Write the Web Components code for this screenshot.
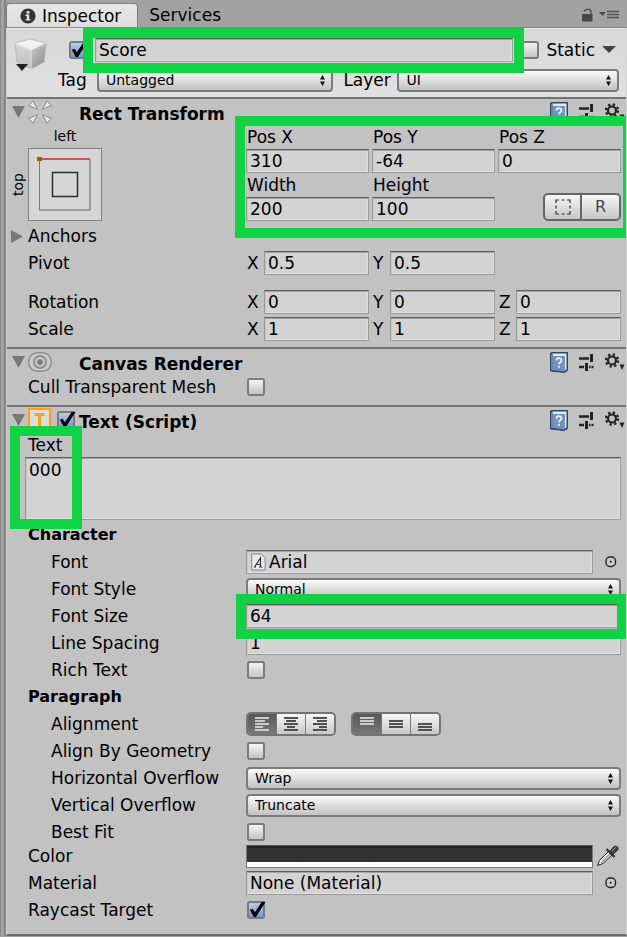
<!DOCTYPE html>
<html lang="en">
<head>
<meta charset="utf-8">
<meta name="viewport" content="width=device-width, initial-scale=1">
<title>Inspector</title>
<style>
  body {
    margin: 0;
    background-color: #a2a2a2;
    color: #000;
    font: 17px/24px "DejaVu Sans", Verdana, sans-serif;
  }
</style>
</head>
<body>

<inspector-window>
  <object-header slot="header"></object-header>

  <inspector-component name="Rect Transform" icon="rect">
    <rect-layout></rect-layout>
    <property-group>
      <vector-property label="Pivot" values="0.5,0.5"></vector-property>
    </property-group>
    <property-group spaced>
      <vector-property label="Rotation" values="0,0,0"></vector-property>
      <vector-property label="Scale" values="1,1,1"></vector-property>
    </property-group>
  </inspector-component>

  <inspector-component name="Canvas Renderer" icon="canvas">
    <toggle-property label="Cull Transparent Mesh"></toggle-property>
  </inspector-component>

  <inspector-component name="Text (Script)" icon="text" toggle>
    <area-property label="Text" value="000"></area-property>
    <property-group name="Character">
      <object-property label="Font" value="Arial" asset></object-property>
      <enum-property label="Font Style" value="Normal"></enum-property>
      <text-property label="Font Size" value="64" marked></text-property>
      <text-property label="Line Spacing" value="1"></text-property>
      <toggle-property label="Rich Text"></toggle-property>
    </property-group>
    <property-group name="Paragraph">
      <align-property label="Alignment"></align-property>
      <toggle-property label="Align By Geometry"></toggle-property>
      <enum-property label="Horizontal Overflow" value="Wrap"></enum-property>
      <enum-property label="Vertical Overflow" value="Truncate"></enum-property>
      <toggle-property label="Best Fit"></toggle-property>
    </property-group>
    <property-group>
      <color-property label="Color" value="#323232"></color-property>
      <object-property label="Material" value="None (Material)"></object-property>
      <toggle-property label="Raycast Target" checked></toggle-property>
    </property-group>
  </inspector-component>
</inspector-window>

<script>
const controls = /* css */`
  * {
    box-sizing: border-box;
  }

  :host {
    box-sizing: border-box;
    display: block;
  }

  input, textarea, select, button {
    color: inherit;
    font: inherit;
    margin: 0;
    min-width: 0;
  }

  input:focus, textarea:focus, select:focus {
    outline: none;
  }

  svg {
    display: block;
    flex: none;
  }

  .field {
    background-color: #d3d3d3;
    border: 1px solid #999;
    border-top-color: #5e5e5e;
    border-radius: 0;
    box-shadow: inset 0 1px #a4a4a4, inset -1px -1px #e0e0e0, inset 1px 0 #c6c6c6;
    height: 24px;
    padding: 0 3px;
    width: 100%;
  }

  .check {
    appearance: none;
    background: linear-gradient(#f4f4f4, #c4c4c4);
    border: 2px solid #7b7b7b;
    border-radius: 3px;
    flex: none;
    height: 18px;
    position: relative;
    width: 18px;
  }

  .check:checked {
    background: linear-gradient(#b4cbea, #7799d0);
  }

  .check:checked::after {
    background-color: #000;
    clip-path: polygon(10% 52%, 26% 46%, 38% 66%, 76% 6%, 98% 4%, 44% 94%, 32% 94%);
    content: "";
    inset: -2px -3px -1px -1px;
    position: absolute;
  }

  .popup {
    display: block;
    position: relative;
    width: 100%;
  }

  .popup select {
    appearance: none;
    background: linear-gradient(#fafafa, #dedede 50%, #c2c2c2);
    border: 2px solid #7b7b7b;
    border-radius: 4px;
    display: block;
    font-size: 14px;
    height: 23px;
    line-height: 18px;
    padding: 0 20px 0 7px;
    width: 100%;
  }

  .popup svg {
    pointer-events: none;
    position: absolute;
    right: 8px;
    top: 6px;
  }

  /* green callout drawn around whatever it wraps */
  .mark {
    position: relative;
  }

  .mark::after {
    border: 10px solid #11d245;
    box-sizing: border-box;
    content: "";
    inset: var(--mark-inset, -10px);
    pointer-events: none;
    position: absolute;
    z-index: 2;
  }
`

const icons = {
  info: '<svg width="16" height="16" viewBox="0 0 16 16"><circle cx="8" cy="8" r="7.6" fill="#333"/><circle cx="8" cy="4.2" r="1.5" fill="#e4e4e4"/><path d="M5.5 6.6h3.7v4.6h1.3v1.4H5.5v-1.4h1.3V8H5.5z" fill="#e4e4e4"/></svg>',
  lock: '<svg width="11" height="14" viewBox="0 0 11 14"><path d="M2 3.500C3.500.5 8.800.5 9 4v3" fill="none" stroke="#555" stroke-width="1.600"/><rect y="6" width="10.500" height="7.500" fill="#484848"/></svg>',
  menu: '<svg width="21" height="12" viewBox="0 0 21 12"><path d="M0 3h7L3.500 7z" fill="#505050"/><path d="M8 2.500h12M8 5.500h12M8 8.500h12" stroke="#555" stroke-width="1.600"/></svg>',
  cube: '<svg width="34" height="34" viewBox="0 0 34 34"><defs><linearGradient id="l" x2="0" y2="1"><stop stop-color="#d9d9d9"/><stop offset="1" stop-color="#bdbdbd"/></linearGradient><linearGradient id="r" x2=".6" y2="1"><stop stop-color="#d2d2d2"/><stop offset="1" stop-color="#909090"/></linearGradient></defs><path d="M16 1 32 5 17 12 1 5z" fill="#f0f0f0"/><path d="M1 5 17 12v19L3 24z" fill="url(#l)"/><path d="M32 5 17 12v19l13-7z" fill="url(#r)"/><path d="M1 5 16 1l16 4-2 19-13 7L3 24z" fill="none" stroke="#a4a4a4" stroke-width=".6"/><path d="m1 5 16 7 15-7M17 12v19" fill="none" stroke="#f0f0f0" stroke-width=".8"/><path d="M2 26h12l-6 7z" fill="#222"/></svg>',
  down: '<svg width="14" height="8" viewBox="0 0 14 8"><path d="M0 0h14L7 7z" fill="#444"/></svg>',
  updown: '<svg width="5" height="11" viewBox="0 0 5 11"><path d="M0 4.500 2.500 0 5 4.500zM0 6.500h5L2.500 11z" fill="#111"/></svg>',
  open: '<svg width="13" height="12" viewBox="0 0 13 12"><path d="M0 0h13L6.500 12z" fill="#777"/></svg>',
  closed: '<svg width="12" height="13" viewBox="0 0 12 13"><path d="M0 0v13l12-6.500z" fill="#777"/></svg>',
  rect: '<svg width="24" height="24" viewBox="0 0 24 24" fill="#e8e8e8" stroke="#888" stroke-linejoin="round"><path d="M.8 5.500 5 .8l4.400 8.400zM23.200 5.500 19 .8l-4.400 8.400zM.8 18.500 5 23.200l4.400-8.400zM23.200 18.500 19 23.200l-4.400-8.400z"/></svg>',
  canvas: '<svg width="24" height="20" viewBox="0 0 24 20" fill="none" stroke="#8b8b8b"><rect x=".7" y=".7" width="22.600" height="18.600" rx="9" fill="#cdcdcd" stroke-width="1.400"/><circle cx="12" cy="10" r="6" stroke-width="2"/><circle cx="12" cy="10" r="2.600" fill="#777"/></svg>',
  text: '<svg width="23" height="24" viewBox="0 0 23 24"><rect x="1" y="1" width="21" height="22" fill="#dcdcdc" stroke="#fda114" stroke-width="2"/><path d="M6.500 5h10v3H13v12h-3V8H6.500z" fill="#fda114"/></svg>',
  book: '<svg width="18" height="21" viewBox="0 0 18 21"><path d="M.5 1 2.500.5h15v18l-3 2-14-1.500z" fill="#35547f" stroke="#30435f"/><path d="M2.500 1.500h14v16l-2 1V4H3z" fill="#e2e8ef"/><path d="M3 4h11.500v15.500L3 18z" fill="#6f93bf"/><path d="M2 2.500v15.500" stroke="#9fb8d6"/><path d="M6.500 8.500c0-3 5-3 5-.2 0 2-2.500 1.800-2.500 4" fill="none" stroke="#eef4fb" stroke-width="1.800"/><circle cx="9" cy="14.800" r="1.100" fill="#eef4fb"/></svg>',
  sliders: '<svg width="15" height="18" viewBox="0 0 15 18" stroke="#222" fill="none"><path d="M0 5.500h10M0 14h5M10 14h1.500" stroke-width="2.400"/><path d="M12.500 1v8M7.500 10v8" stroke-width="3"/><path d="M12.500 14h2" stroke-width="2.400"/></svg>',
  gear: '<svg width="20" height="18" viewBox="0 0 20 18"><circle cx="7" cy="7.500" r="4" fill="none" stroke="#222" stroke-width="2.200"/><circle cx="7" cy="7.500" r="6" fill="none" stroke="#222" stroke-width="2.400" stroke-dasharray="2.300 2.410"/><path d="M14.500 11.500h5L17 17z" fill="#222"/></svg>',
  anchors: '<svg width="74" height="73" viewBox="0 0 74 73"><rect x=".5" y=".5" width="73" height="72" fill="#d6d6d6" stroke="#818181"/><path d="M62 11v51H11" fill="none" stroke="#888" stroke-width="1.500"/><path d="M11.500 62V11" stroke="#d34e4e"/><path d="M11 11h51" stroke="#d34e4e" stroke-width="2"/><rect x="24.500" y="24.500" width="25" height="24" fill="none" stroke="#2e2e2e" stroke-width="1.500"/><path d="M9 9h5v4H9z" fill="#996300"/></svg>',
  blueprint: '<svg width="16" height="16" viewBox="0 0 16 16"><path d="M1 4V1h3M6.500 1h3M12 1h3v3M15 6.500v3M15 12v3h-3M9.500 15h-3M4 15H1v-3M1 9.500v-3" fill="none" stroke="#333" stroke-width="1.200"/></svg>',
  asset: '<svg width="15" height="18" viewBox="0 0 15 18"><path d="M.7 1h9.500l4 4v12H.7z" fill="#e6ebef" stroke="#7b858d"/><path d="m3.500 14 6-9v9M5.500 11.500h4M3 14h2M8 14h3.500" fill="none" stroke="#333" stroke-width="1.200"/></svg>',
  picker: '<svg width="12" height="12" viewBox="0 0 12 12"><rect x="1" y="1" width="9.500" height="9.500" rx="4" fill="#ccc" stroke="#222" stroke-width="1.400"/><circle cx="5.700" cy="5.700" r="1" fill="#111"/></svg>',
  dropper: '<svg width="23" height="22" viewBox="0 0 23 22"><path d="m1.500 20.500 2-5 9-9 3.500 3.500-9 8.500z" fill="#eee" stroke="#222"/><path d="m5 18 9-9" stroke="#999" stroke-width="1.500"/><path d="m10.500 4 8 8" stroke="#333" stroke-width="2.400"/><path d="m13.500 7 4-5c2-2 6 0 4 3l-5 5z" fill="#444" stroke="#222"/><path d="m16 6 3.500-3.500" stroke="#aaa"/></svg>'
}

class BaseElement extends HTMLElement {
  constructor () {
    super()
    this.shadow = this.attachShadow({ mode: 'open' })
  }

  connectedCallback () {
    this.render()
  }
}

class InspectorWindow extends BaseElement {
  render () {
    this.shadow.innerHTML =
      /* html */`
      <style>
        ${controls}

        :host {
          padding-left: 6px;
          background: linear-gradient(to right, #8a8a8a 1px, #a2a2a2 1px, #a2a2a2 4px, #858585 4px, #858585 6px, #a2a2a2 6px);
        }

        .tabs {
          align-items: end;
          background-color: #a2a2a2;
          border-bottom: 1px solid #868686;
          display: flex;
          height: 28px;
        }

        .tabs button {
          align-items: center;
          background: none;
          border: none;
          display: flex;
          gap: 6px;
          height: 24px;
          padding: 0 11px;
        }

        .tabs button[aria-selected="true"] {
          background: linear-gradient(#e6e6e6, #dedede);
          border: 1px solid #7c7c7c;
          border-bottom: none;
          border-radius: 4px 4px 0 0;
          padding: 0 16px 0 13px;
        }

        .tools {
          align-items: center;
          display: flex;
          gap: 6px;
          height: 24px;
          margin-left: auto;
          padding-right: 7px;
        }

        main {
          background-color: #c2c2c2;
          border-bottom: 2px solid #6d6d6d;
          border-left: 1px solid #d0d0d0;
          border-right: 1px solid #d4d4d4;
          overflow-x: clip;
          overflow-clip-margin: 1px;
        }
      </style>

      <nav class="tabs" role="tablist">
        <button role="tab" aria-selected="true">${icons.info}Inspector</button>
        <button role="tab" aria-selected="false">Services</button>
        <div class="tools">${icons.lock}${icons.menu}</div>
      </nav>
      <main>
        <slot name="header"></slot>
        <slot></slot>
      </main>
      `
  }
}

class ObjectHeader extends BaseElement {
  render () {
    this.shadow.innerHTML =
      /* html */`
      <style>
        ${controls}

        :host {
          background: linear-gradient(#d8d8d8, #e0e0e0);
          border-top: 1px solid #ececec;
          display: flex;
          gap: 10px;
          height: 69px;
          padding: 9px 7px 0 7px;
        }

        .rows {
          display: flex;
          flex: 1;
          flex-direction: column;
          gap: 6px;
          min-width: 0;
        }

        .row {
          align-items: center;
          display: flex;
          height: 24px;
        }

        .name {
          --mark-inset: -10px -11px -11px -12px;
          flex: 1;
          margin: 0 8px;
        }

        .name input {
          display: block;
        }

        .active {
          margin-left: 11px;
        }

        .static {
          align-items: center;
          display: flex;
          gap: 7px;
          padding-right: 3px;
        }

        .tag, .layer {
          flex: none;
          width: 39px;
        }

        .layer {
          padding-left: 10px;
          width: 64px;
        }

        .popup {
          flex: 15 1 0;
        }

        .tag + .popup {
          flex: 16 1 0;
        }
      </style>

      ${icons.cube}
      <div class="rows">
        <div class="row">
          <input class="check active" type="checkbox" aria-label="Active" checked>
          <div class="name mark"><input class="field" type="text" aria-label="Name" value="Score"></div>
          <label class="static"><input class="check" type="checkbox">Static ${icons.down}</label>
        </div>
        <div class="row">
          <label class="tag" for="tag">Tag</label>
          <span class="popup"><select id="tag"><option>Untagged</option></select>${icons.updown}</span>
          <label class="layer" for="layer">Layer</label>
          <span class="popup"><select id="layer"><option>UI</option></select>${icons.updown}</span>
        </div>
      </div>
      `
  }
}

class InspectorComponent extends BaseElement {
  render () {
    const name = this.getAttribute('name')

    this.shadow.innerHTML =
      /* html */`
      <style>
        ${controls}

        :host {
          border-top: 2px solid #737373;
          padding-bottom: 6px;
        }

        :host([toggle]) {
          padding-bottom: 12px;
        }

        header {
          align-items: center;
          display: flex;
          height: 26px;
          padding: 0 1px 0 5px;
        }

        .icon {
          margin-left: 3px;
          width: 29px;
        }

        h2 {
          flex: 1;
          font-size: 17px;
          font-weight: 700;
          margin: 0;
          padding: 3px 0 0 22px;
        }

        .check + h2 {
          padding-left: 4px;
        }

        .tools {
          align-items: center;
          display: flex;
          gap: 11px;
        }

        .body {
          padding: 0 5px 0 21px;
        }
      </style>

      <header>
        ${icons.open}
        <div class="icon">${icons[this.getAttribute('icon')]}</div>
        ${this.hasAttribute('toggle') ? `<input class="check" type="checkbox" aria-label="${name}" checked>` : ''}
        <h2>${name}</h2>
        <div class="tools">${icons.book}${icons.sliders}${icons.gear}</div>
      </header>
      <div class="body"><slot></slot></div>
      `
  }
}

class PropertyGroup extends BaseElement {
  render () {
    const name = this.getAttribute('name')

    this.shadow.innerHTML =
      /* html */`
      <style>
        ${controls}

        :host {
          display: flex;
          flex-direction: column;
          gap: 3px;
        }

        :host([name]) {
          --indent: 23px;
          padding-top: 3px;
        }

        :host([spaced]) {
          padding-top: 15px;
        }

        h3 {
          font-size: 16px;
          font-weight: 700;
          margin: 0;
        }
      </style>

      ${name ? `<h3>${name}</h3>` : ''}
      <slot></slot>
      `
  }
}

class RectLayout extends BaseElement {
  cell (id, label, value) {
    return /* html */`
      <div class="cell">
        <label for="${id}">${label}</label>
        <input class="field" id="${id}" type="text" value="${value}">
      </div>`
  }

  render () {
    this.shadow.innerHTML =
      /* html */`
      <style>
        ${controls}

        .top {
          display: grid;
          grid-template-columns: 218px 1fr;
        }

        .preset {
          align-content: start;
          display: grid;
          font-size: 14px;
          grid-template-columns: 20px 74px;
          line-height: 23px;
          margin-left: -20px;
        }

        .preset .x {
          grid-column: 2;
          text-align: center;
        }

        .preset .y {
          line-height: 20px;
          text-align: center;
          transform: rotate(180deg);
          writing-mode: vertical-rl;
        }

        .cells {
          --mark-inset: -9px -12px -17px -11px;
          display: grid;
          gap: 0 3px;
          grid-template-columns: repeat(3, 1fr);
        }

        .cell {
          display: flex;
          flex-direction: column;
        }

        .cell label {
          padding-left: 1px;
        }

        .modes {
          align-self: end;
          display: flex;
          justify-self: end;
        }

        .modes button {
          align-items: center;
          background: linear-gradient(#f6f6f6, #c6c6c6);
          border: 2px solid #666;
          border-radius: 5px 0 0 5px;
          color: #444;
          display: flex;
          font-size: 16px;
          height: 28px;
          justify-content: center;
          padding: 0;
          width: 39px;
        }

        .modes button + button {
          border-left: none;
          border-radius: 0 5px 5px 0;
        }

        .anchors {
          align-items: center;
          background: none;
          border: none;
          display: flex;
          gap: 5px;
          margin: 3px 0 3px -17px;
          padding: 0;
        }
      </style>

      <div class="top">
        <div class="preset">
          <div class="x">left</div>
          <div class="y">top</div>
          ${icons.anchors}
        </div>
        <div class="cells mark">
          ${this.cell('x', 'Pos X', '310')}
          ${this.cell('y', 'Pos Y', '-64')}
          ${this.cell('z', 'Pos Z', '0')}
          ${this.cell('width', 'Width', '200')}
          ${this.cell('height', 'Height', '100')}
          <div class="modes">
            <button aria-label="Blueprint mode">${icons.blueprint}</button>
            <button>R</button>
          </div>
        </div>
      </div>
      <button class="anchors">${icons.closed}Anchors</button>
      `
  }
}

/* label on the left, control on the right */
class Property extends BaseElement {
  get value () {
    return this.getAttribute('value') || ''
  }

  styles () {
    return ''
  }

  render () {
    this.shadow.innerHTML =
      /* html */`
      <style>
        ${controls}

        :host {
          display: grid;
          grid-template-columns: 218px 1fr;
          min-height: 24px;
        }

        .label {
          padding-left: var(--indent, 0);
          white-space: nowrap;
        }

        .control {
          align-items: center;
          display: flex;
          min-width: 0;
        }

        .side {
          align-items: center;
          background: none;
          border: none;
          display: flex;
          flex: none;
          height: 24px;
          justify-content: center;
          padding: 0 0 0 7px;
          width: 28px;
        }

        ${this.styles()}
      </style>

      <label class="label" for="control">${this.getAttribute('label')}</label>
      <div class="control">${this.control()}</div>
      `
  }
}

class TextProperty extends Property {
  styles () {
    return /* css */`
      .mark {
        --mark-inset: -10px -6px -11px -10px;
        flex: 1;
      }
    `
  }

  control () {
    const field = `<input class="field" id="control" type="text" value="${this.value}">`
    return this.hasAttribute('marked') ? `<div class="control mark">${field}</div>` : field
  }
}

class ToggleProperty extends Property {
  styles () {
    return /* css */`
      .check {
        margin-left: 1px;
      }
    `
  }

  control () {
    return `<input class="check" id="control" type="checkbox" ${this.hasAttribute('checked') ? 'checked' : ''}>`
  }
}

class EnumProperty extends Property {
  control () {
    return `<span class="popup"><select id="control"><option>${this.value}</option></select>${icons.updown}</span>`
  }
}

class ObjectProperty extends Property {
  styles () {
    return /* css */`
      .object {
        flex: 1;
        position: relative;
      }

      .object .field {
        display: block;
      }

      :host([asset]) .field {
        padding-left: 22px;
      }

      .object svg {
        left: 5px;
        position: absolute;
        top: 3px;
      }
    `
  }

  control () {
    return /* html */`
      <div class="object">
        <input class="field" id="control" type="text" value="${this.value}">
        ${this.hasAttribute('asset') ? icons.asset : ''}
      </div>
      <button class="side" aria-label="Select">${icons.picker}</button>`
  }
}

class ColorProperty extends Property {
  styles () {
    return /* css */`
      .swatch {
        appearance: none;
        background-color: #fff;
        border: 1px solid #777;
        border-top-color: #555;
        flex: 1;
        height: 23px;
        padding: 0 0 5px;
      }

      .swatch::-webkit-color-swatch-wrapper {
        padding: 0;
      }

      .swatch::-webkit-color-swatch {
        border: none;
        border-radius: 0;
        box-shadow: inset 0 2px #222;
      }

      .side {
        padding-left: 0;
      }
    `
  }

  control () {
    return /* html */`
      <input class="swatch" id="control" type="color" value="${this.value}">
      <button class="side" aria-label="Pick color">${icons.dropper}</button>`
  }
}

class VectorProperty extends Property {
  styles () {
    return /* css */`
      .control {
        display: grid;
        gap: 3px;
        grid-template-columns: repeat(3, 1fr);
      }

      .axis {
        align-items: center;
        display: grid;
        grid-template-columns: 17px 1fr;
        padding-left: 1px;
      }
    `
  }

  control () {
    const values = this.getAttribute('values').split(',')
    return values.map((value, i) => /* html */`
      <label class="axis">${'XYZ'[i]}<input class="field" ${i ? '' : 'id="control"'} type="text" value="${value}"></label>`).join('')
  }
}

class AlignProperty extends Property {
  styles () {
    return /* css */`
      .control {
        gap: 15px;
      }

      .set {
        border: 2px solid #757575;
        border-radius: 5px;
        display: flex;
        height: 24px;
        overflow: hidden;
        width: 90px;
      }

      .set button {
        align-items: center;
        background: linear-gradient(#f6f6f6, #c8c8c8);
        border: none;
        border-left: 1px solid #757575;
        color: #505050;
        display: flex;
        flex: 1;
        justify-content: center;
        padding: 0;
      }

      .set button:first-child {
        border-left: none;
      }

      .set button[aria-pressed="true"] {
        background: linear-gradient(#585858, #787878);
        color: #ccc;
      }
    `
  }

  lines (widths, place, top) {
    const path = widths.map((w, i) => {
      const x = place === 'left' ? 0 : place === 'right' ? 14 - w : (14 - w) / 2
      return `M${x} ${top + i * 3}h${w}`
    }).join('')
    return `<svg width="14" height="16" viewBox="0 0 14 16"><path d="${path}" stroke="currentColor" stroke-width="2"/></svg>`
  }

  control () {
    const ragged = [14, 10, 14, 8, 14]
    const button = (name, svg, pressed) => `<button aria-label="${name}" aria-pressed="${pressed}">${svg}</button>`
    return /* html */`
      <div class="set">
        ${button('Left', this.lines(ragged, 'left', 2), true)}
        ${button('Center', this.lines(ragged, 'center', 2), false)}
        ${button('Right', this.lines(ragged, 'right', 2), false)}
      </div>
      <div class="set">
        ${button('Top', this.lines([14, 14, 14], 'left', 2), true)}
        ${button('Middle', this.lines([14, 14, 14], 'left', 5), false)}
        ${button('Bottom', this.lines([14, 14, 14], 'left', 8), false)}
      </div>`
  }
}

class AreaProperty extends BaseElement {
  render () {
    this.shadow.innerHTML =
      /* html */`
      <style>
        ${controls}

        /* the callout only covers the start of the text */
        .mark {
          --mark-inset: -7px auto -9px -18px;
        }

        .mark::after {
          width: 72px;
        }

        label {
          display: block;
        }

        textarea {
          display: block;
          margin-left: -3px;
          resize: none;
        }

        textarea.field {
          height: 63px;
          margin-left: -3px;
          width: calc(100% + 3px);
        }
      </style>

      <div class="mark">
        <label for="area">${this.getAttribute('label')}</label>
        <textarea class="field" id="area">${this.getAttribute('value')}</textarea>
      </div>
      `
  }
}

customElements.define('inspector-window', InspectorWindow)
customElements.define('object-header', ObjectHeader)
customElements.define('inspector-component', InspectorComponent)
customElements.define('property-group', PropertyGroup)
customElements.define('rect-layout', RectLayout)
customElements.define('text-property', TextProperty)
customElements.define('toggle-property', ToggleProperty)
customElements.define('enum-property', EnumProperty)
customElements.define('object-property', ObjectProperty)
customElements.define('color-property', ColorProperty)
customElements.define('vector-property', VectorProperty)
customElements.define('align-property', AlignProperty)
customElements.define('area-property', AreaProperty)
</script>
</body>
</html>
